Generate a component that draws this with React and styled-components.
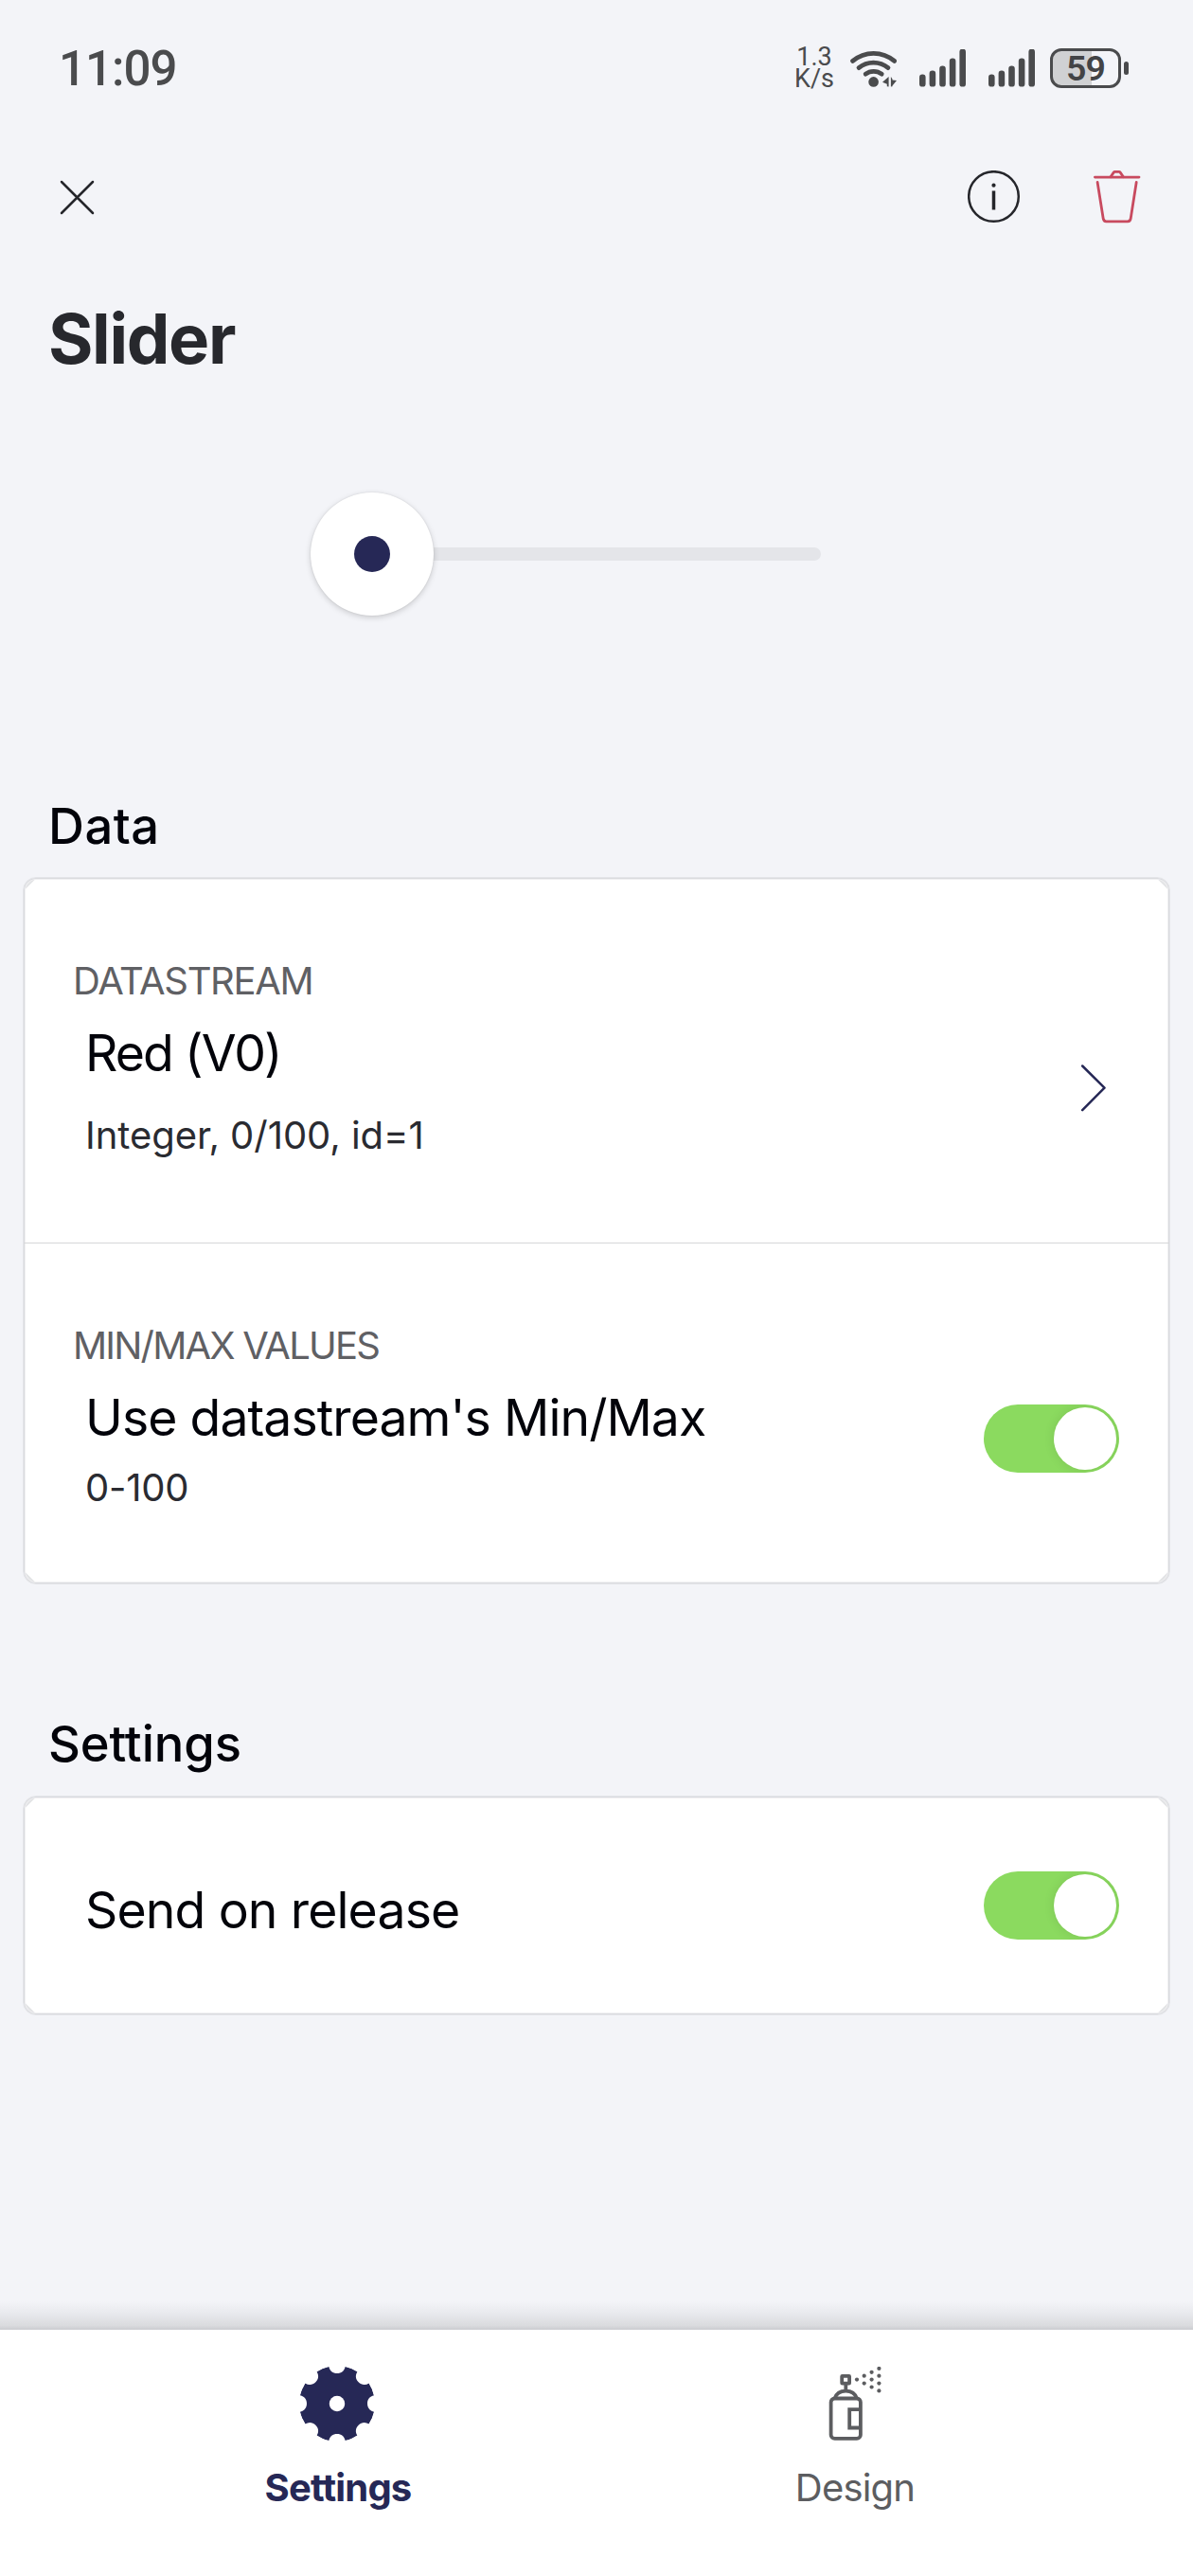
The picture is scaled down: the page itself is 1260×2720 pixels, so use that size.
import React from 'react';
import styled, { createGlobalStyle } from 'styled-components';

const GlobalStyle = createGlobalStyle`
  *, *::before, *::after { box-sizing: border-box; }
  body { margin: 0; background: #f3f4f8; }
  svg { display: block; flex: none; }
`;

const Page = styled.div`
  display: flex;
  flex-direction: column;
  width: 1260px;
  height: 2720px;
  overflow: hidden;
  background: #f3f4f8;
  font-family: Inter, "Liberation Sans", sans-serif;
`;

/* ---------- status bar ---------- */

const StatusBar = styled.header`
  display: flex;
  align-items: center;
  flex: none;
  height: 144px;
  padding: 0 68px 0 62px;
  color: #4a4b4d;
  font-family: Roboto, sans-serif;
`;

const Clock = styled.div`
  margin-right: auto;
  padding-top: 2px;
  font-size: 51px;
  font-weight: 500;
  line-height: 60px;
  letter-spacing: -1px;
`;

const NetRate = styled.div`
  display: flex;
  flex-direction: column;
  align-items: center;
  width: 42px;
  margin-right: 17px;
  font-size: 27px;
  line-height: 23px;
  white-space: nowrap;
`;

const StatusIcons = styled.div`
  display: flex;
  align-items: center;
  gap: 24px;
`;

const Battery = styled.div`
  display: flex;
  align-items: center;
  gap: 3px;
  margin-left: 16px;
`;

const BatteryShell = styled.div`
  display: flex;
  align-items: center;
  justify-content: center;
  width: 75px;
  height: 42px;
  border: 3px solid #4a4b4d;
  border-radius: 12px;
  background: linear-gradient(to right, #d0d1d3 59%, #f4f5f9 59%);
  color: #434446;
  font-size: 37.5px;
  font-weight: 600;
  line-height: 42px;
  letter-spacing: -0.8px;
`;

const BatteryNub = styled.div`
  width: 5px;
  height: 14px;
  border-radius: 2.5px;
  background: #4a4b4d;
`;

/* ---------- top bar ---------- */

const Toolbar = styled.div`
  display: flex;
  align-items: center;
  flex: none;
  height: 127px;
  padding: 0 54px 0 62px;
`;

const IconButton = styled.button`
  display: block;
  margin: ${(p) => p.$margin || 0};
  padding: 0;
  border: 0;
  background: none;
`;

const Title = styled.h1`
  flex: none;
  margin: 41px 0 0 51px;
  font-size: 72.5px;
  font-weight: 700;
  line-height: 91px;
  letter-spacing: -1.35px;
  color: #27282d;
`;

/* ---------- slider ---------- */

const SliderArea = styled.div`
  display: flex;
  align-items: center;
  flex: none;
  height: 364px;
  padding-left: 328px;
`;

const Thumb = styled.div`
  display: flex;
  align-items: center;
  justify-content: center;
  z-index: 1;
  width: 130px;
  height: 130px;
  border-radius: 50%;
  background: #fff;
  box-shadow: 0 2px 6px rgba(0, 0, 0, 0.17), 0 0 2px rgba(0, 0, 0, 0.1);
`;

const ThumbDot = styled.div`
  width: 38px;
  height: 38px;
  border-radius: 50%;
  background: #262856;
`;

const Track = styled.div`
  width: 419px;
  height: 14px;
  margin-left: -10px;
  border-radius: 7px;
  background: #e4e5e9;
`;

/* ---------- sections ---------- */

const Section = styled.section`
  flex: none;
  padding: ${(p) => p.$top}px 24px 0;
`;

const SectionTitle = styled.h2`
  margin: 0 0 ${(p) => p.$gap}px 27px;
  font-size: 52.5px;
  font-weight: 550;
  line-height: 60px;
  letter-spacing: ${(p) => p.$track || 0}px;
  color: #02030a;
`;

const Card = styled.div`
  height: ${(p) => p.$height}px;
  border: 1px solid #e4e5e9;
  border-radius: 14px;
  background:
    linear-gradient(135deg, #e3e4e6 9.5px, transparent 10px),
    linear-gradient(225deg, #e3e4e6 9.5px, transparent 10px),
    linear-gradient(45deg, #e3e4e6 9.5px, transparent 10px),
    linear-gradient(315deg, #e3e4e6 9.5px, transparent 10px),
    #fff;
  box-shadow: inset 0 0 0 1px #dadbdf, inset 0 0 0 2px #f0f0f2;
`;

const Row = styled.div`
  display: flex;
  align-items: flex-start;
  justify-content: space-between;
  height: ${(p) => p.$height}px;
  padding: 0 ${(p) => p.$right}px 0 52px;
  border-bottom: ${(p) => (p.$divided ? '1px solid #d6d7d9' : '0')};
`;

const RowText = styled.div`
  display: flex;
  flex-direction: column;
  padding-top: ${(p) => p.$top}px;
  white-space: nowrap;
`;

const Label = styled.div`
  margin-bottom: 26px;
  font-size: 40px;
  font-weight: 400;
  line-height: 40px;
  letter-spacing: ${(p) => p.$track}px;
  color: #5f6064;
`;

const RowTitle = styled.div`
  margin-left: 13px;
  font-size: 53.5px;
  font-weight: 400;
  line-height: 60px;
  letter-spacing: ${(p) => p.$track}px;
  color: #02030a;
`;

const Detail = styled.div`
  margin: ${(p) => p.$gap}px 0 0 13px;
  font-size: 40px;
  font-weight: 400;
  line-height: 40px;
  letter-spacing: ${(p) => p.$track}px;
  color: #2a2b31;
`;

const RowAction = styled.div`
  padding-top: ${(p) => p.$top}px;
`;

const Switch = styled.div`
  display: flex;
  justify-content: flex-end;
  width: 143px;
  height: 72px;
  padding: 3px;
  overflow: hidden;
  border-radius: 36px;
  background: #8bda5f;
`;

const SwitchKnob = styled.div`
  width: 66px;
  height: 66px;
  border-radius: 50%;
  background: #fff;
  box-shadow: 0 0 12px rgba(0, 0, 0, 0.1);
`;

/* ---------- bottom navigation ---------- */

const NavShade = styled.div`
  flex: none;
  height: 30px;
  margin-top: auto;
  background: linear-gradient(to bottom, #f3f4f8 0%, #e9eaee 40%, #dadbde 85%, #cbccd0 100%);
`;

const BottomNav = styled.nav`
  display: flex;
  flex: none;
  height: 260px;
  padding: 39px 84px 0;
  background: #fff;
`;

const Tab = styled.div`
  display: flex;
  flex: 1;
  flex-direction: column;
  align-items: center;
  gap: 30px;
  font-size: 40px;
  line-height: 40px;
  font-weight: ${(p) => (p.$active ? 700 : 400)};
  letter-spacing: -0.8px;
  color: ${(p) => (p.$active ? '#262856' : '#5c5d60')};
`;

/* ---------- icons ---------- */

const WifiIcon = () => (
  <svg width="49" height="40" viewBox="0 0 49 40" fill="none" stroke="#4a4b4d" strokeWidth="4.8" strokeLinecap="round">
    <path d="M2.6 12.4a34 34 0 0 1 44 0" />
    <path d="M9 19.6a24.5 24.5 0 0 1 31 0" />
    <path d="M16.2 26.2a14 14 0 0 1 17 0" />
    <circle cx="24.6" cy="34.4" r="5.3" fill="#4a4b4d" stroke="none" />
    <path d="M40.6 29v10.5l-1.8-.2v-2.6L34 34.8zM42.9 29l1.6 2.6v1L49 33l-4.5 5.4v.9l-1.6.2z" fill="#4a4b4d" stroke="none" />
  </svg>
);

const SIGNAL_BARS = [13, 17, 22, 30, 40];

const SignalIcon = () => (
  <svg width="49" height="40" viewBox="0 0 49 40" fill="#4a4b4d">
    {SIGNAL_BARS.map((h, i) => (
      <rect key={h} x={i * 10.6} y={39.6 - h} width="6.6" height={h} rx="3.2" />
    ))}
  </svg>
);

const CloseIcon = () => (
  <svg width="40" height="40" viewBox="0 0 40 40" stroke="#25262b" strokeWidth="2.5" strokeLinecap="round">
    <path d="M3 3l33 33M36 3L3 36" />
  </svg>
);

const InfoIcon = () => (
  <svg width="56" height="56" viewBox="0 0 56 56" fill="none" stroke="#25262b">
    <circle cx="27.5" cy="27.5" r="26.3" strokeWidth="2.5" />
    <path d="M27.5 21.500v20" strokeWidth="3.500" />
    <circle cx="27.5" cy="15.700" r="2.1" fill="#25262b" stroke="none" />
  </svg>
);

const TrashIcon = () => (
  <svg width="52" height="56" viewBox="0 0 52 56" fill="none" stroke="#c84a5f" strokeWidth="2.8" strokeLinecap="round" strokeLinejoin="round">
    <path d="M2.4 7.100h46.6" />
    <path d="M19 6.700l3.2-4.600q.5-.7 1.3-.7h4.4q.8 0 1.3.7L32.400 6.700" />
    <path d="M5.100 12.500l6.100 38.300q.5 3 3.200 3h22.600q2.700 0 3.200-3L46.200 12.500" />
  </svg>
);

const ChevronIcon = () => (
  <svg width="28" height="50" viewBox="0 0 28 50" fill="none" stroke="#262856" strokeWidth="2.5" strokeLinecap="round" strokeLinejoin="round">
    <path d="M2.200 1.500l23.300 23.200L2.200 48.200" />
  </svg>
);

const NOTCHES = [0, 45, 90, 135, 180, 225, 270, 315];

const GearIcon = () => (
  <svg width="80" height="78" viewBox="-39 -39 80 78">
    <mask id="gear-cut" maskUnits="userSpaceOnUse" x="-42" y="-42" width="84" height="84">
      <circle r="40" fill="#fff" />
      <circle r="8.200" fill="#000" />
      {NOTCHES.map((deg) => (
        <path key={deg} transform={`rotate(${deg})`} d="M-10-42L-8.700-39C-7.600-34.500-4.500-32 0-32S7.600-34.500 8.700-39L10-42z" fill="#000" />
      ))}
    </mask>
    <circle r="40" fill="#262856" mask="url(#gear-cut)" />
  </svg>
);

const SPRAY = [
  [41, 13.6],
  [48.7, 9.7], [48.7, 17.6],
  [56.6, 5.8], [56.6, 13.6], [56.6, 21.5],
  [64.4, 1.9], [64.4, 9.7], [64.4, 17.6], [64.4, 25.4],
];

const SprayIcon = () => (
  <svg width="78" height="78" viewBox="0 0 78 78" fill="none" stroke="#5c5d60" strokeWidth="3.8">
    <rect x="13.6" y="33.5" width="31.3" height="42.4" rx="4" />
    <path d="M17.5 33.500c1.600-4.800 6-7.900 11.800-7.900s10.100 3.100 11.700 7.900" />
    <path d="M29.300 25.600v-7" />
    <rect x="25.2" y="9.8" width="7.9" height="7.9" rx=".4" />
    <path d="M44.900 45.100H33.200v19.400h11.700" />
    {SPRAY.map(([x, y]) => (
      <circle key={`${x}-${y}`} cx={x} cy={y} r="2.1" fill="#5c5d60" stroke="none" />
    ))}
  </svg>
);

const Toggle = () => (
  <Switch role="switch" aria-checked="true">
    <SwitchKnob />
  </Switch>
);

export default function App() {
  return (
    <Page>
      <GlobalStyle />
      <StatusBar>
        <Clock>11:09</Clock>
        <NetRate>
          <span>1.3</span>
          <span>K/s</span>
        </NetRate>
        <StatusIcons>
          <WifiIcon />
          <SignalIcon />
          <SignalIcon />
        </StatusIcons>
        <Battery>
          <BatteryShell>59</BatteryShell>
          <BatteryNub />
        </Battery>
      </StatusBar>

      <Toolbar>
        <IconButton $margin="2px auto 0 0"><CloseIcon /></IconButton>
        <IconButton $margin="0 76px 0 0"><InfoIcon /></IconButton>
        <IconButton><TrashIcon /></IconButton>
      </Toolbar>

      <Title>Slider</Title>

      <SliderArea>
        <Thumb><ThumbDot /></Thumb>
        <Track />
      </SliderArea>

      <Section $top={75}>
        <SectionTitle $gap={24} $track={0.5}>Data</SectionTitle>
        <Card $height={747}>
          <Row $height={386} $right={66} $divided>
            <RowText $top={89}>
              <Label $track={-1.35}>DATASTREAM</Label>
              <RowTitle $track={-1.9}>Red (V0)</RowTitle>
              <Detail $gap={37} $track={-0.05}>Integer, 0/100, id=1</Detail>
            </RowText>
            <RowAction $top={197}><ChevronIcon /></RowAction>
          </Row>
          <Row $height={359} $right={53}>
            <RowText $top={88}>
              <Label $track={-1.8}>MIN/MAX VALUES</Label>
              <RowTitle $track={-0.93}>Use datastream's Min/Max</RowTitle>
              <Detail $gap={24} $track={-0.25}>0-100</Detail>
            </RowText>
            <RowAction $top={170}><Toggle /></RowAction>
          </Row>
        </Card>
      </Section>

      <Section $top={138}>
        <SectionTitle $gap={25} $track={-0.1}>Settings</SectionTitle>
        <Card $height={232}>
          <Row $height={230} $right={53}>
            <RowText $top={90}>
              <RowTitle $track={-0.86}>Send on release</RowTitle>
            </RowText>
            <RowAction $top={79}><Toggle /></RowAction>
          </Row>
        </Card>
      </Section>

      <NavShade />
      <BottomNav>
        <Tab $active>
          <GearIcon />
          Settings
        </Tab>
        <Tab>
          <SprayIcon />
          Design
        </Tab>
      </BottomNav>
    </Page>
  );
}
